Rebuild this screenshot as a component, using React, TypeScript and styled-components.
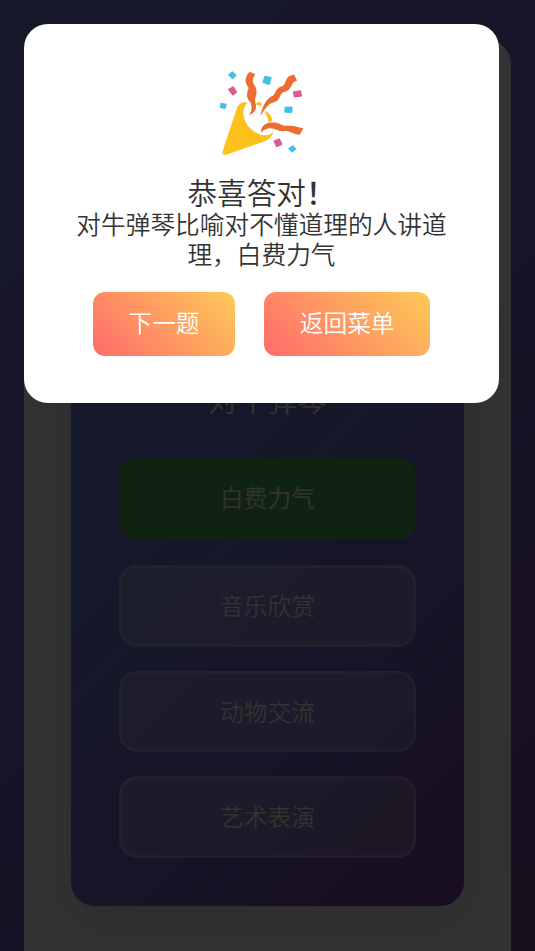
import React from "react";
import styled, { createGlobalStyle, css } from "styled-components";

const GlobalStyle = createGlobalStyle`
  * { box-sizing: border-box; }
  html, body { margin: 0; height: 100%; overflow: hidden; }
  body, button { font-family: "Noto Sans CJK SC", sans-serif; font-weight: 350; }
`;

const Page = styled.main`
  height: 951px;
  padding: 40px 24px 0;
  overflow: hidden;
  background: linear-gradient(135deg, #6e7bcd 0%, #7364c4 50%, #784c98 100%);
`;

const GameCard = styled.section`
  height: 1000px;
  padding: 243px 47px 0;
  border-radius: 24px;
  background: #f7f7f7;
`;

const QuestionPanel = styled.div`
  height: 622.5px;
  padding: 92px 48px 0;
  border-radius: 24px;
  background: linear-gradient(135deg, #6a7bd2 0%, #6b78d0 32%, #7364c3 66%, #7b4696 100%);
  box-shadow: 0 12px 48px rgba(0, 0, 0, 0.1);
  text-align: center;
`;

const Idiom = styled.h2`
  height: 60px;
  margin: 0 0 24.6px;
  color: #fafaf0;
  font-size: 29.7px;
  font-weight: inherit;
  line-height: 48px;
`;

const Options = styled.div`
  display: grid;
  grid-auto-rows: 81.5px;
  gap: 24px;
`;

const Option = styled.button<{ $correct?: boolean }>`
  padding: 0 0 1px;
  border: 3px solid rgba(255, 255, 255, 0.22);
  border-radius: 18px;
  background: rgba(255, 255, 255, 0.2);
  background-clip: padding-box;
  color: #fafae6;
  font-size: 23.7px;
  line-height: 36px;
  background-clip: border-box;
  ${({ $correct }) =>
    $correct &&
    css`
      padding-bottom: 2px;
      border-color: #53b050;
      background: #53b050;
      color: #fff;
      transform: translateY(-2px);
    `}
`;

const Backdrop = styled.div`
  position: fixed;
  inset: 0;
  padding: 24px;
  background: rgba(0, 0, 0, 0.8);
`;

const Dialog = styled.div`
  width: 475px;
  height: 379px;
  padding: 41px 48px 0;
  border-radius: 24px;
  background: #fff;
  color: #333;
  text-align: center;
`;

const Popper = styled.svg`
  display: block;
  width: 96px;
  height: 96px;
  margin: 0 auto;
`;

const Heading = styled.h1`
  margin: 13px 0 0;
  font-size: 29.6px;
  font-weight: inherit;
  line-height: 35px;
`;

const Exclamation = styled.span`
  font-weight: 500;
`;

const Explanation = styled.p`
  margin: 0;
  font-size: 24.7px;
  line-height: 29.6px;
`;

const Actions = styled.div`
  display: flex;
  justify-content: center;
  gap: 29px;
  margin-top: 23.5px;
`;

const Action = styled.button`
  height: 64px;
  padding: 0 35.6px 3px;
  border: 0;
  border-radius: 12px;
  background: linear-gradient(45deg, #ff6b6b, #feca57);
  color: #fff;
  font-size: 23.7px;
  line-height: 36px;
  white-space: nowrap;
`;

const answers = ["白费力气", "音乐欣赏", "动物交流", "艺术表演"];

function PartyPopper() {
  return (
    <Popper viewBox="213.8 65 96 96" aria-hidden="true">
      <path
        d="M242 102.5Q238 104 236.4 109L222.3 151.6Q221.7 155.5 225.5 155L258 143.5C267 141 273 137 272.8 132C267 139 252 134 246 123C242 116 242 107 247.3 103.2Q244 101 242 102.5Z"
        fill="#fcc21b"
      />
      <path d="M256.5 102.2Q259 101.5 261.8 104L260.2 106.3Q258 104.5 256 105.2ZM266 111Q272 115.5 272.2 121L268.5 123Q268 117 264.8 112.6Z" fill="#fcc21b" />
      <path
        d="M248.8 115C252 110 252 107 250 102C245 97 247 92 248.5 88C244 82 244.5 77 249.5 71.8L255.2 74.3C251.5 80 252 82 255.3 87C258.5 94 253.5 97 255.3 103C257.5 109 253 114.5 248.8 115Z"
        fill="#ed6c30"
      />
      <path
        d="M260 116C262 108 265 100 271 96.5C276 95 275 88 281 86.5C287 86 283 76 294 74.5L296.8 80.8C290 82 293 88.5 285.5 91.5C279 92 281 99.5 275 101.8C268 103 265 109 260 116Z"
        fill="#ed6c30"
      />
      <path
        d="M260.7 132.5C261 122.5 271 121 280 124C286 127.5 291 124 297 127L303.2 128.2L299.5 134.8C293 134.8 290 130 283 131.3C276 132 271 123.5 260.7 132.5Z"
        fill="#ed6c30"
      />
      <g fill="#40c0e7" stroke="#40c0e7" strokeWidth="1.9" strokeLinejoin="round">
        <path d="M229 74.8L232.3 72.3L235.3 75.3L232.4 78.2Z" />
        <path d="M265 76.7L270.5 78L268.7 84L263.2 82Z" />
        <path d="M221.2 103.7L225.6 104.7L224.5 108L220.7 107Z" />
        <path d="M285.2 107.8L291.3 107.4L291.3 112L285 111.7Z" />
        <path d="M289.2 148.5L292.5 146.3L295 149L292 151.5Z" />
      </g>
      <g fill="#d85b91" stroke="#d85b91" strokeWidth="1.9" strokeLinejoin="round">
        <path d="M228.8 89.5L232.8 87.3L236 92L232.8 94.6Z" />
        <path d="M293.7 92.2L300 91.2L300.8 95.7L294.4 96.4Z" />
        <path d="M274.3 141.4L279 139.4L281.2 143.8L276.7 146.2Z" />
      </g>
    </Popper>
  );
}

export default function App() {
  return (
    <>
      <GlobalStyle />
      <Page>
        <GameCard>
          <QuestionPanel>
            <Idiom>对牛弹琴</Idiom>
            <Options>
              {answers.map((answer, index) => (
                <Option key={answer} $correct={index === 0}>{answer}</Option>
              ))}
            </Options>
          </QuestionPanel>
        </GameCard>
      </Page>
      <Backdrop>
        <Dialog role="dialog" aria-modal="true">
          <PartyPopper />
          <Heading>恭喜答对<Exclamation>！</Exclamation></Heading>
          <Explanation>对牛弹琴比喻对不懂道理的人讲道理，白费力气</Explanation>
          <Actions>
            <Action>下一题</Action>
            <Action>返回菜单</Action>
          </Actions>
        </Dialog>
      </Backdrop>
    </>
  );
}
